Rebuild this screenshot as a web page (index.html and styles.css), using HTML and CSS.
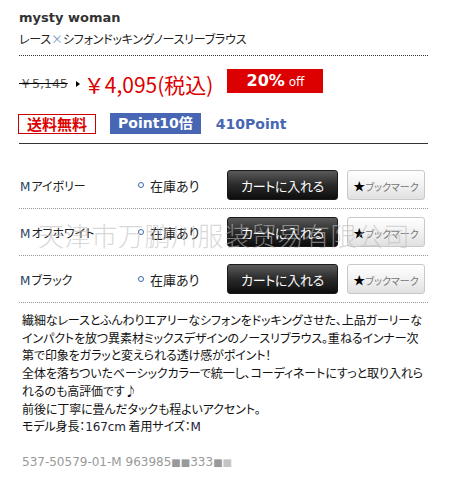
FILE: index.html
```html
<!DOCTYPE html>
<html lang="ja">
<head>
    <meta charset="UTF-8">
    <meta name="viewport" content="width=device-width, initial-scale=1.0">
    <title>mysty woman レース×シフォンドッキングノースリーブラウス</title>
    <link rel="stylesheet" href="styles.css">
</head>
<body>

    <div class="page">
        <div class="head">
            <h1 class="brand">mysty woman</h1>
            <p class="title">レース<span class="cross">×</span>シフォンドッキングノースリーブラウス</p>
        </div>

        <div class="price-row">
            <span class="old-price">￥5,145</span>
            <span class="arrow"></span>
            <span class="price">￥4,095(税込)</span>
            <span class="off"><b>20%</b> off</span>
        </div>

        <div class="badges">
            <span class="free">送料無料</span>
            <span class="point-box">Point10倍</span>
            <span class="point">410Point</span>
        </div>

        <div class="variants">
            <div class="variant">
                <div class="name"><span class="size">M</span>アイボリー</div>
                <div class="stock"><span class="ring"></span>在庫あり</div>
                <button class="cart" type="button">カートに入れる</button>
                <button class="bookmark" type="button"><span class="star">★</span>ブックマーク</button>
            </div>
            <div class="variant">
                <div class="name"><span class="size">M</span>オフホワイト</div>
                <div class="stock"><span class="ring"></span>在庫あり</div>
                <button class="cart" type="button">カートに入れる</button>
                <button class="bookmark" type="button"><span class="star">★</span>ブックマーク</button>
            </div>
            <div class="variant">
                <div class="name"><span class="size">M</span>ブラック</div>
                <div class="stock"><span class="ring"></span>在庫あり</div>
                <button class="cart" type="button">カートに入れる</button>
                <button class="bookmark" type="button"><span class="star">★</span>ブックマーク</button>
            </div>
            <!-- 透かし -->
            <div class="watermark">天津市万鹏川服装贸易有限公司</div>
        </div>

        <div class="desc">
            繊細なレースとふんわりエアリーなシフォンをドッキングさせた、上品ガーリーな<br>
            インパクトを放つ異素材ミックスデザインのノースリブラウス。重ねるインナー次<br>
            第で印象をガラッと変えられる透け感がポイント！<br>
            全体を落ちついたベーシックカラーで統一し、コーディネートにすっと取り入れら<br>
            れるのも高評価です♪<br>
            前後に丁寧に畳んだタックも程よいアクセント。<br>
            モデル身長：<span class="num">167cm</span> 着用サイズ：<span class="num">M</span>
        </div>

        <div class="code">537-50579-01-M 963985<span class="sq">■■</span>333<span class="sq">■</span><span class="sq light">■</span></div>
    </div>

</body>
</html>
```

FILE: styles.css
```css
body {
    margin: 0;
    background-color: #fff;
    color: #222;
    font-family: "Noto Sans CJK JP", "DejaVu Sans", sans-serif;
}
.page {
    width: 409px;
    padding: 0 24px 20px 19px;
}

/* 見出し */
.head {
    padding: 10px 0 8px;
    border-bottom: 1px dotted #333;
}
.brand {
    margin: 0;
    font-family: "DejaVu Sans", sans-serif;
    font-size: 13px;
    line-height: 16px;
    font-weight: bold;
    color: #333;
}
.title {
    margin: 5px 0 0;
    font-size: 12px;
    line-height: 16px;
    color: #222;
    font-feature-settings: "palt";
    letter-spacing: -0.2px;
    white-space: nowrap;
}
.cross {
    color: #7b9cc4;
}

/* 価格 */
.price-row {
    display: flex;
    align-items: flex-end;
    margin-top: 13px;
    height: 24px;
}
.old-price {
    font-family: "DejaVu Sans", sans-serif;
    font-size: 12.5px;
    line-height: 14px;
    color: #555;
    text-decoration: line-through;
    text-decoration-color: #000;
    margin-bottom: 2px;
}
.arrow {
    width: 0;
    height: 0;
    border-left: 4px solid #000;
    border-top: 3px solid transparent;
    border-bottom: 3px solid transparent;
    margin: 0 4px 6px 8px;
}
.price {
    font-size: 21px;
    line-height: 24px;
    color: #dd0000;
    margin-bottom: -3px;
    white-space: nowrap;
}
.off {
    width: 96px;
    height: 24px;
    margin-left: 14px;
    background-color: #dd0000;
    color: #fff;
    text-align: center;
    font-family: "DejaVu Sans", sans-serif;
    font-size: 12px;
    line-height: 24px;
}
.off b {
    font-size: 16px;
}

/* バッジ */
.badges {
    display: flex;
    align-items: center;
    margin-top: 20px;
    padding-bottom: 9px;
    border-bottom: 1px solid #333;
}
.free {
    margin-left: -1px;
    padding: 0 8px;
    height: 18px;
    line-height: 18px;
    border: 1px solid #cc0000;
    color: #dd0000;
    font-size: 15px;
    font-weight: bold;
}
.point-box {
    margin-left: 14px;
    padding: 0 8px;
    height: 21px;
    line-height: 21px;
    background-color: #4766b4;
    color: #fff;
    font-family: "DejaVu Sans", "Noto Sans CJK JP", sans-serif;
    font-size: 14px;
    font-weight: bold;
}
.point {
    margin-left: 15px;
    color: #4766b4;
    font-family: "DejaVu Sans", sans-serif;
    font-size: 14px;
    font-weight: bold;
}

/* カラー別 */
.variants {
    position: relative;
    margin-top: 18px;
}
.variant {
    display: flex;
    align-items: center;
    padding: 8px 0;
    border-bottom: 1px dotted #999;
}
.name {
    width: 116px;
    padding-left: 1px;
    font-size: 12px;
    font-feature-settings: "palt";
}
.size {
    font-family: "DejaVu Sans", sans-serif;
    font-size: 12px;
    color: #2a4060;
    margin-right: 1px;
}
.stock {
    display: flex;
    align-items: center;
    width: 91px;
    font-size: 13px;
    font-feature-settings: "palt";
}
.ring {
    width: 4px;
    height: 4px;
    border: 1.5px solid #3a6aa8;
    border-radius: 50%;
    margin: 0 6px 0 2px;
}
.cart {
    width: 111px;
    height: 30px;
    padding: 0;
    border: 1px solid #1a1a1a;
    border-radius: 3px;
    background: linear-gradient(#5a5a5a, #2a2a2a 50%, #0d0d0d);
    color: #fff;
    font-family: "Noto Sans CJK JP", sans-serif;
    font-size: 13px;
    letter-spacing: -0.3px;
    font-feature-settings: "palt";
    cursor: pointer;
}
.bookmark {
    width: 78px;
    height: 30px;
    margin-left: 9px;
    padding: 0;
    border: 1px solid #c8c8c8;
    border-radius: 3px;
    background: linear-gradient(#fff, #f2f2f2 50%, #e0e0e0);
    color: #777;
    font-family: "Noto Sans CJK JP", sans-serif;
    font-size: 10px;
    font-feature-settings: "palt";
    cursor: pointer;
}
.star {
    color: #000;
    font-size: 12px;
}
.watermark {
    position: absolute;
    left: 19px;
    top: 58px;
    font-family: "Noto Sans CJK SC", sans-serif;
    font-weight: 300;
    font-size: 26px;
    letter-spacing: 0.6px;
    line-height: 30px;
    color: rgba(190, 190, 190, 0.6);
    white-space: nowrap;
    pointer-events: none;
}

/* 説明 */
.desc {
    margin-top: 8px;
    padding-left: 3px;
    font-size: 12px;
    line-height: 17.7px;
    color: #111;
    font-feature-settings: "palt";
    letter-spacing: -0.1px;
    white-space: nowrap;
}
.num {
    font-family: "DejaVu Sans", sans-serif;
    color: #223;
}
.code {
    margin-top: 18px;
    padding-left: 3px;
    font-family: "DejaVu Sans", sans-serif;
    font-size: 12px;
    color: #999;
}
.sq {
    font-size: 10px;
    color: #999;
}
.sq.light {
    color: #c4c4c4;
}
```
